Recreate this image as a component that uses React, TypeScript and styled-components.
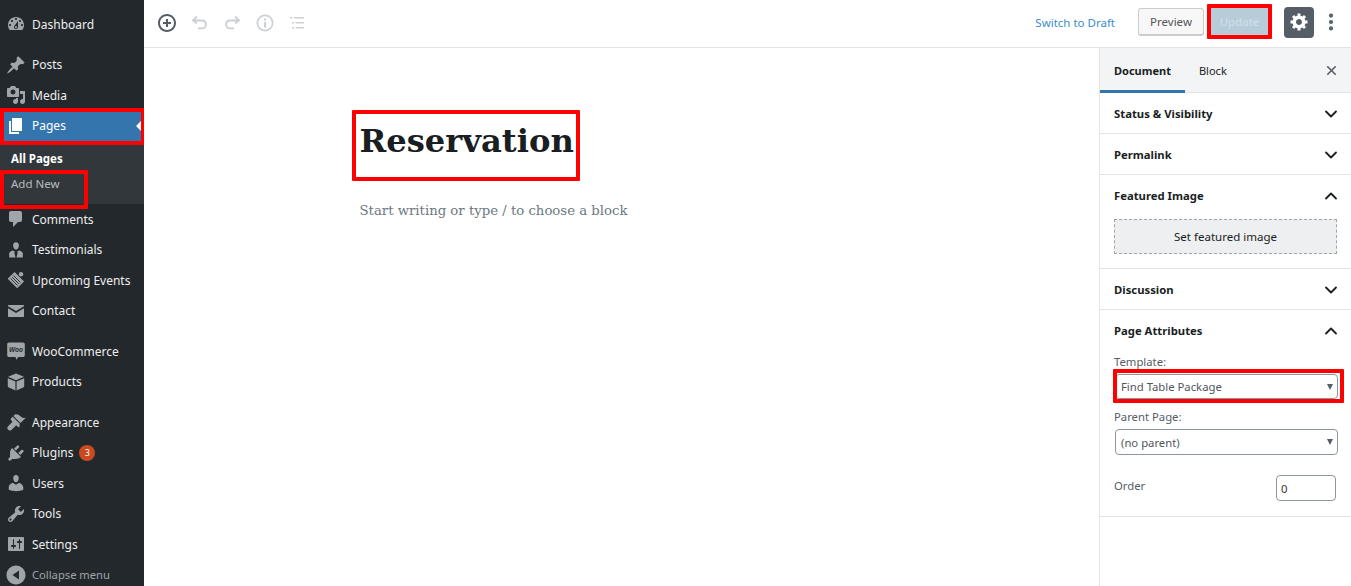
import React from "react"
import styled, { createGlobalStyle } from "styled-components"
import { ChevronDown, ChevronUp, X, MoreVertical } from "lucide-react"

const GlobalStyle = createGlobalStyle`
  html, body { margin: 0; padding: 0; height: 100%; overflow: hidden; background: #fff; }
  #root { height: 100%; }
  * { box-sizing: border-box; }
`

const icons: Record<string, React.ReactNode> = {
  dashboard: <path d="M3.76 16h12.48c1.1-1.37 1.76-3.11 1.76-5 0-4.42-3.58-8-8-8s-8 3.58-8 8c0 1.89.66 3.63 1.76 5zM10 4c.55 0 1 .45 1 1s-.45 1-1 1-1-.45-1-1 .45-1 1-1zM6 6c.55 0 1 .45 1 1s-.45 1-1 1-1-.45-1-1 .45-1 1-1zm8 0c.55 0 1 .45 1 1s-.45 1-1 1-1-.45-1-1 .45-1 1-1zm-5.37 5.55L12 7v6c0 1.1-.9 2-2 2s-2-.9-2-2c0-.57.24-1.08.63-1.45zM4 10c.55 0 1 .45 1 1s-.45 1-1 1-1-.45-1-1 .45-1 1-1zm12 0c.55 0 1 .45 1 1s-.45 1-1 1-1-.45-1-1 .45-1 1-1zm-5 3c0-.55-.45-1-1-1s-1 .45-1 1 .45 1 1 1 1-.45 1-1z" fillRule="evenodd" />,
  post: <path d="M10.44 3.02l1.82-1.82 6.36 6.35-1.83 1.82c-1.05-.68-2.48-.57-3.41.36l-.75.75c-.92.93-1.04 2.35-.35 3.41l-1.83 1.82-2.41-2.41-2.8 2.79c-.42.42-3.38 2.71-3.8 2.29s1.86-3.39 2.28-3.81l2.79-2.79L4.1 9.36l1.83-1.82c1.05.69 2.48.57 3.4-.36l.75-.75c.93-.92 1.05-2.35.36-3.41z" />,
  media: <path d="M13 11V4c0-.55-.45-1-1-1h-1.67L9 1H5L3.67 3H2c-.55 0-1 .45-1 1v7c0 .55.45 1 1 1h10c.55 0 1-.45 1-1zM7 4.5c1.38 0 2.5 1.12 2.5 2.5S8.38 9.5 7 9.5 4.5 8.38 4.5 7 5.62 4.5 7 4.5zM14 6h5v10.5c0 1.38-1.12 2.5-2.5 2.5S14 17.88 14 16.5s1.12-2.5 2.5-2.5c.17 0 .34.02.5.05V9h-3V6zm-4 8.05V13h2v3.5c0 1.38-1.12 2.5-2.5 2.5S7 17.88 7 16.5 8.12 14 9.5 14c.17 0 .34.02.5.05z" fillRule="evenodd" />,
  page: <path d="M6 15V2h10v13H6zm-1 1h8v2H3V5h2v11z" />,
  comments: <path d="M5 2h9c1.1 0 2 .9 2 2v7c0 1.1-.9 2-2 2h-2l-5 5v-5H5c-1.1 0-2-.9-2-2V4c0-1.1.9-2 2-2z" />,
  person: (
    <>
      <path d="M10 2.2c1.9 0 3 1.4 2.9 3.3-.1 1.900-1.100 4-2.900 4s-2.800-2.100-2.900-4C7 3.600 8.100 2.200 10 2.200z" />
      <path d="M6.600 10.500l2.300 1-.6 1.300 1.200 4.700H3.200v-3.900c0-1.500 1.800-2.600 3.400-3.100zM13.400 10.500c1.600.5 3.400 1.600 3.400 3.100v3.900h-6.300l1.200-4.700-.6-1.300z" />
    </>
  ),
  ticket: (
    <>
      <path d="M8.500 2l9.500 9.500-6.800 6.800L1.700 8.800z" />
      <path d="M7.500 5.500l7 7M6 7l7 7M4.500 8.500l7 7" stroke="#23282d" strokeWidth=".9" fill="none" />
      <circle cx="15" cy="4.200" r="2.200" />
    </>
  ),
  email: <path d="M2.500 4h15c.3 0 .5.2.5.500v.800l-8 4.700-8-4.700v-.800c0-.3.2-.5.500-.500zM2 7.200l8 4.700 8-4.700v8.300c0 .3-.2.5-.5.500h-15c-.3 0-.5-.2-.5-.5z" />,
  woo: (
    <>
      <path d="M3 1.500h14c1 0 1.800.8 1.800 1.800v11c0 1-.8 1.800-1.800 1.800h-4.800l-1.700 2.600-1-2.600H3c-1 0-1.800-.8-1.800-1.800v-11c0-1 .8-1.800 1.800-1.800z" />
      <text x="10" y="11" textAnchor="middle" fontSize="6.500" fontStyle="italic" fontWeight="700" fontFamily="'Liberation Sans', sans-serif" fill="#23282d">Woo</text>
    </>
  ),
  box: (
    <>
      <path d="M10 1.500l8 3.300-8 3.400-8-3.400z" />
      <path d="M1.800 6.200l7.600 3.200v9.100l-7.600-3.400zM18.200 6.200l-7.600 3.200v9.100l7.600-3.400z" />
    </>
  ),
  appearance: <path d="M14.480 11.060L7.410 3.990l1.500-1.500c.5-.56 2.300-.47 3.510.32 1.210.8 1.430 1.280 2.910 2.100 1.180.64 2.450 1.260 4.450.85zm-.71.71L6.700 4.700 4.930 6.470c-.39.39-.39 1.020 0 1.410l1.060 1.060c.39.39.39 1.020 0 1.410l-4.100 4.100c-.78.78-.78 2.050 0 2.830l.71.7c.78.78 2.050.78 2.830 0l4.100-4.100c.39-.39 1.020-.39 1.410 0l1.060 1.060c.39.39 1.020.39 1.410 0z" />,
  plugin: <path d="M13.110 4.360L9.870 7.600 8 5.730l3.240-3.240c.35-.34 1.050-.2 1.560.32.52.51.66 1.210.31 1.550zm-8 1.770l.91-1.120 9.010 9.010-1.190.84c-.71.71-2.630 1.160-3.820 1.160H6.140L4.900 17.260c-.59.59-1.540.59-2.120 0-.59-.58-.59-1.530 0-2.120l1.240-1.240v-3.880c0-1.130.4-3.190 1.090-3.890zm7.260 3.970l3.240-3.240c.34-.35 1.040-.21 1.550.31.52.51.66 1.210.31 1.550l-3.240 3.250z" />,
  users: <path d="M10 9.250c-2.270 0-2.730-3.440-2.730-3.440C7 4.020 7.820 2 9.970 2c2.160 0 2.980 2.020 2.710 3.810 0 0-.41 3.440-2.680 3.440zm0 2.570L12.720 10c2.390 0 4.520 2.330 4.520 4.530v2.490s-3.650 1.130-7.240 1.130c-3.650 0-7.240-1.130-7.240-1.130v-2.490c0-2.250 1.940-4.480 4.470-4.480z" />,
  tools: <path d="M16.680 9.770c-1.340 1.340-3.300 1.670-4.950.99l-5.410 6.520c-.99.99-2.590.99-3.580 0s-.99-2.590 0-3.570l6.520-5.420c-.68-1.650-.35-3.610.99-4.950 1.280-1.280 3.120-1.620 4.720-1.060l-2.890 2.890 2.820 2.820 2.860-2.870c.53 1.580.18 3.390-1.080 4.650zM3.810 16.210c.4.39 1.040.39 1.430 0 .4-.4.4-1.040 0-1.430-.39-.4-1.030-.4-1.430 0-.39.39-.39 1.030 0 1.430z" fillRule="evenodd" />,
  settings: <path d="M18 16V4c0-.55-.45-1-1-1H3c-.55 0-1 .45-1 1v12c0 .55.45 1 1 1h14c.55 0 1-.45 1-1zM8 11h1c.55 0 1 .45 1 1s-.45 1-1 1H8v1.500c0 .28-.22.5-.5.5s-.5-.22-.5-.5V13H6c-.55 0-1-.45-1-1s.45-1 1-1h1V5.500c0-.28.22-.5.5-.5s.5.22.5.5V11zm5-2h-1c-.55 0-1-.45-1-1s.45-1 1-1h1V5.500c0-.28.22-.5.5-.5s.5.22.5.5V7h1c.55 0 1 .45 1 1s-.45 1-1 1h-1v5.500c0 .28-.22.5-.5.5s-.5-.22-.5-.5V9z" fillRule="evenodd" />,
  collapse: <path d="M10 .5c5.200 0 9.500 4.300 9.500 9.500s-4.300 9.500-9.500 9.500S.5 15.200.5 10 4.800.5 10 .5zM13 5.500l-6.500 4.500 6.500 4.500z" fillRule="evenodd" />,
}

type MenuItem = { label: string; icon: string; active?: boolean; badge?: string; dim?: boolean }

const menu: MenuItem[][] = [
  [{ label: "Dashboard", icon: "dashboard" }],
  [
    { label: "Posts", icon: "post" },
    { label: "Media", icon: "media" },
    { label: "Pages", icon: "page", active: true },
    { label: "Comments", icon: "comments" },
    { label: "Testimonials", icon: "person" },
    { label: "Upcoming Events", icon: "ticket" },
    { label: "Contact", icon: "email" },
  ],
  [
    { label: "WooCommerce", icon: "woo" },
    { label: "Products", icon: "box" },
  ],
  [
    { label: "Appearance", icon: "appearance" },
    { label: "Plugins", icon: "plugin", badge: "3" },
    { label: "Users", icon: "users" },
    { label: "Tools", icon: "tools" },
    { label: "Settings", icon: "settings" },
    { label: "Collapse menu", icon: "collapse", dim: true },
  ],
]

const panels = ["Status & Visibility", "Permalink"]

export default function App() {
  return (
    <Shell>
      <GlobalStyle />
      <Sidebar>
        {menu.map((group, i) => (
          <MenuGroup key={i}>
            {group.map((item) => (
              <React.Fragment key={item.label}>
                <MenuRow $active={item.active} $dim={item.dim}>
                  <MenuIcon viewBox="0 0 20 20" $active={item.active}>{icons[item.icon]}</MenuIcon>
                  {item.label}
                  {item.badge && <Badge>{item.badge}</Badge>}
                  {item.active && <ActiveArrow />}
                  {item.active && <Mark $inset="-3px -1px -4px 0" />}
                </MenuRow>
                {item.active && (
                  <SubMenu>
                    <SubItem $current>All Pages</SubItem>
                    <SubItem>
                      Add New
                      <Mark $inset="-1px auto -13px -11px" $width="88px" />
                    </SubItem>
                  </SubMenu>
                )}
              </React.Fragment>
            ))}
          </MenuGroup>
        ))}
      </Sidebar>

      <Main>
        <TopBar>
          <ToolGroup>
            <ToolIcon viewBox="0 0 20 20" fill="#555d66">
              <path d="M10 1c-5 0-9 4-9 9s4 9 9 9 9-4 9-9-4-9-9-9zm0 16c-3.900 0-7-3.100-7-7s3.100-7 7-7 7 3.100 7 7-3.100 7-7 7zm1-11H9v3H6v2h3v3h2v-3h3V9h-3V6z" />
            </ToolIcon>
            <ToolIcon viewBox="0 0 20 20" $muted fill="none" stroke="currentColor" strokeWidth="1.800">
              <path d="M7 3.500L3 7.500l4 3M3.500 7.500H12c2.500 0 4 1.700 4 3.800s-1.500 4-4 4H8" strokeLinejoin="miter" />
            </ToolIcon>
            <ToolIcon viewBox="0 0 20 20" $muted fill="none" stroke="currentColor" strokeWidth="1.800">
              <path d="M13 3.500l4 4-4 3M16.500 7.500H8c-2.500 0-4 1.700-4 3.800s1.500 4 4 4h4" strokeLinejoin="miter" />
            </ToolIcon>
            <ToolIcon viewBox="0 0 20 20" $muted fill="currentColor">
              <path d="M10 1.500a8.500 8.500 0 1 0 0 17 8.500 8.500 0 0 0 0-17zm0 1.700a6.800 6.800 0 1 1 0 13.600 6.800 6.800 0 0 1 0-13.600zM9 5.500h2v2H9zM9 9h2v5.500H9z" fillRule="evenodd" />
            </ToolIcon>
            <ToolIcon viewBox="0 0 20 20" $muted fill="currentColor">
              <path d="M3 4h2.500v1.500H3zM7 4h10v1.500H7zM5 9h2v1.500H5zM8.500 9H17v1.500H8.500zM5 14h2v1.500H5zM8.500 14H17v1.500H8.500z" />
            </ToolIcon>
          </ToolGroup>
          <Actions>
            <DraftLink>Switch to Draft</DraftLink>
            <PreviewButton>Preview</PreviewButton>
            <UpdateButton>
              Update
              <Mark $inset="-4px -3px -3px -3px" />
            </UpdateButton>
            <SettingsButton>
              <svg viewBox="0 0 20 20" width="20" height="20" fill="#fff">
                <path d="M18 12h-2.180c-.17.7-.44 1.350-.81 1.930l1.540 1.540-2.100 2.100-1.540-1.540c-.58.36-1.230.63-1.910.79V19H8v-2.180c-.68-.16-1.330-.43-1.910-.79l-1.540 1.540-2.120-2.120 1.540-1.540c-.36-.58-.63-1.230-.79-1.910H1V9.030h2.170c.16-.7.44-1.350.8-1.940L2.430 5.550l2.100-2.100 1.540 1.540c.58-.37 1.240-.64 1.930-.81V2h3v2.180c.68.16 1.330.43 1.910.79l1.540-1.540 2.120 2.120-1.540 1.540c.36.59.64 1.240.8 1.940H18V12zm-8.500 1.500c1.660 0 3-1.340 3-3s-1.340-3-3-3-3 1.340-3 3 1.340 3 3 3z" fillRule="evenodd" transform="translate(.5 -.5)" />
              </svg>
            </SettingsButton>
            <MoreVertical size={22} color="#555d66" strokeWidth={2.600} />
          </Actions>
        </TopBar>

        <Workspace>
          <Editor>
            <Title>
              Reservation
              <Mark $inset="-6px -6px -15px -8px" />
            </Title>
            <Placeholder>Start writing or type / to choose a block</Placeholder>
          </Editor>

          <Inspector>
            <Tabs>
              <Tab $active>Document</Tab>
              <Tab>Block</Tab>
              <CloseIcon><X size={15} strokeWidth={2.500} /></CloseIcon>
            </Tabs>
            {panels.map((p) => (
              <Panel key={p}>
                <PanelHead>{p}<ChevronDown size={20} strokeWidth={2.200} /></PanelHead>
              </Panel>
            ))}
            <Panel>
              <PanelHead>Featured Image<ChevronUp size={20} strokeWidth={2.200} /></PanelHead>
              <PanelBody $pad="4px 14px 14px">
                <FeaturedButton>Set featured image</FeaturedButton>
              </PanelBody>
            </Panel>
            <Panel>
              <PanelHead>Discussion<ChevronDown size={20} strokeWidth={2.200} /></PanelHead>
            </Panel>
            <Panel>
              <PanelHead>Page Attributes<ChevronUp size={20} strokeWidth={2.200} /></PanelHead>
              <PanelBody $pad="5px 13px 15px 15px">
                <FieldLabel>Template:</FieldLabel>
                <SelectBox $height={25}>
                  Find Table Package
                  <SelectArrow />
                  <Mark $inset="-6px -7px -5px -3px" />
                </SelectBox>
                <FieldLabel $top={11}>Parent Page:</FieldLabel>
                <SelectBox $height={26}>
                  (no parent)
                  <SelectArrow />
                </SelectBox>
                <OrderRow>
                  <FieldLabel $top={4}>Order</FieldLabel>
                  <OrderInput>0</OrderInput>
                </OrderRow>
              </PanelBody>
            </Panel>
          </Inspector>
        </Workspace>
      </Main>
    </Shell>
  )
}

const Shell = styled.div`
  display: flex;
  height: 100%;
  font-family: "Noto Sans", "Open Sans", sans-serif;
  color: #23282d;
`

const Sidebar = styled.nav`
  width: 144px;
  flex: none;
  height: 586px;
  overflow: hidden;
  padding-top: 9px;
  background: #23282d;
`

const MenuGroup = styled.div`
  margin-bottom: 10px;
`

const MenuRow = styled.div<{ $active?: boolean; $dim?: boolean }>`
  position: relative;
  display: flex;
  align-items: center;
  height: 30.5px;
  padding-left: 6px;
  font-size: ${(p) => (p.$dim ? "11.2px" : "12px")};
  color: ${(p) => (p.$active ? "#fff" : p.$dim ? "#a0a5aa" : "#eee")};
  background: ${(p) => (p.$active ? "#3575ad" : "transparent")};
`

const MenuIcon = styled.svg<{ $active?: boolean }>`
  width: 20px;
  height: 20px;
  margin-right: 6px;
  flex: none;
  fill: ${(p) => (p.$active ? "#fff" : "#a0a5aa")};
`

const Badge = styled.span`
  width: 16px;
  height: 16px;
  margin-left: 6px;
  border-radius: 50%;
  background: #ca4a1f;
  color: #fff;
  font-size: 9px;
  line-height: 16px;
  text-align: center;
`

const ActiveArrow = styled.i`
  position: absolute;
  right: 3px;
  top: 50%;
  margin-top: -5px;
  border: 5px solid transparent;
  border-right-color: #fff;
  border-left-width: 0;
`

const SubMenu = styled.div`
  height: 63px;
  padding: 4.5px 0 0 11px;
  background: #32373c;
`

const SubItem = styled.div<{ $current?: boolean }>`
  position: relative;
  height: 25px;
  font-size: 11.5px;
  line-height: 25px;
  font-weight: ${(p) => (p.$current ? 700 : 400)};
  color: ${(p) => (p.$current ? "#fff" : "rgba(240, 245, 250, 0.7)")};
`

const Mark = styled.span<{ $inset: string; $width?: string }>`
  position: absolute;
  inset: ${(p) => p.$inset};
  width: ${(p) => p.$width ?? "auto"};
  border: 4px solid #f00;
  border-radius: 1px;
  pointer-events: none;
`

const Main = styled.div`
  flex: 1;
  min-width: 0;
  display: flex;
  flex-direction: column;
`

const TopBar = styled.header`
  height: 48px;
  flex: none;
  display: flex;
  align-items: center;
  justify-content: space-between;
  padding: 0 9px 3px 13px;
  border-bottom: 1px solid #e2e4e7;
`

const ToolGroup = styled.div`
  display: flex;
  gap: 12.5px;
  margin-top: 1px;
`

const ToolIcon = styled.svg<{ $muted?: boolean }>`
  width: 20px;
  height: 20px;
  color: ${(p) => (p.$muted ? "#ccd0d4" : "#555d66")};
`

const Actions = styled.div`
  display: flex;
  align-items: center;
`

const DraftLink = styled.span`
  margin-right: 23px;
  font-size: 11.5px;
  color: #3b8ccb;
`

const PreviewButton = styled.div`
  width: 66px;
  height: 28px;
  margin-right: 6px;
  border: 1px solid #ccc;
  border-bottom-width: 2px;
  border-radius: 3px;
  background: #f7f7f7;
  font-size: 11.5px;
  line-height: 25px;
  text-align: center;
  color: #555;
`

const UpdateButton = styled.div`
  position: relative;
  width: 59px;
  height: 28px;
  margin-right: 15px;
  background: #b6cdd9;
  font-size: 11.5px;
  line-height: 28px;
  text-align: center;
  color: #cfe0e8;
`

const SettingsButton = styled.div`
  display: flex;
  align-items: center;
  justify-content: center;
  width: 30px;
  height: 31px;
  margin-right: 6px;
  border-radius: 4px;
  background: #555d66;
`

const Workspace = styled.div`
  flex: 1;
  min-height: 0;
  display: flex;
`

const Editor = styled.main`
  flex: 1;
  padding: 68px 0 0 215.500px;
`

const Title = styled.h1`
  position: relative;
  width: fit-content;
  margin: 0;
  font-family: "DejaVu Serif", serif;
  font-size: 32.200px;
  line-height: 50px;
  font-weight: 700;
  color: #191e23;
`

const Placeholder = styled.p`
  margin: 33px 0 0;
  font-family: "DejaVu Serif", serif;
  font-size: 13.250px;
  line-height: 24px;
  color: #6c7781;
`

const Inspector = styled.aside`
  width: 252px;
  flex: none;
  border-left: 1px solid #e2e4e7;
`

const Tabs = styled.div`
  display: flex;
  align-items: stretch;
  height: 45px;
  background: #f3f4f5;
  border-bottom: 1px solid #e2e4e7;
`

const Tab = styled.div<{ $active?: boolean }>`
  display: flex;
  align-items: center;
  padding: 0 14px;
  margin-bottom: -1px;
  font-size: 11px;
  font-weight: ${(p) => (p.$active ? 700 : 400)};
  color: #191e23;
  border-top: 3px solid transparent;
  border-bottom: 3px solid ${(p) => (p.$active ? "#3575ad" : "transparent")};
`

const CloseIcon = styled.div`
  display: flex;
  align-items: center;
  margin-left: auto;
  padding-right: 12px;
  color: #555d66;
`

const Panel = styled.section`
  border-bottom: 1px solid #e2e4e7;
`

const PanelHead = styled.div`
  display: flex;
  align-items: center;
  justify-content: space-between;
  height: 40px;
  padding: 1px 10px 0 14px;
  font-size: 11.300px;
  font-weight: 700;
  color: #191e23;
`

const PanelBody = styled.div<{ $pad: string }>`
  padding: ${(p) => p.$pad};
`

const FeaturedButton = styled.div`
  height: 35px;
  border: 1px dashed #a0a5aa;
  background: #edeff0;
  font-size: 11.500px;
  line-height: 33px;
  text-align: center;
  color: #191e23;
`

const FieldLabel = styled.div<{ $top?: number }>`
  margin-top: ${(p) => p.$top ?? 0}px;
  margin-bottom: 5px;
  margin-left: -1px;
  font-size: 11.300px;
  line-height: 14px;
  color: #555d66;
`

const SelectBox = styled.div<{ $height: number }>`
  position: relative;
  display: flex;
  align-items: center;
  height: ${(p) => p.$height}px;
  padding-left: 5px;
  border: 1px solid #8d96a0;
  border-radius: 4px;
  font-size: 11.300px;
  color: #50575e;
`

const SelectArrow = styled.i`
  position: absolute;
  right: 4px;
  top: 50%;
  margin-top: -3px;
  border: 3.500px solid transparent;
  border-top: 6px solid #555d66;
  border-bottom-width: 0;
`

const OrderRow = styled.div`
  display: flex;
  justify-content: space-between;
  align-items: flex-start;
  margin-top: 20px;
  padding-right: 2px;
`

const OrderInput = styled.div`
  width: 60px;
  height: 26px;
  padding-left: 4px;
  border: 1px solid #8d96a0;
  border-radius: 4px;
  font-size: 11.300px;
  line-height: 26px;
  color: #32373c;
`
